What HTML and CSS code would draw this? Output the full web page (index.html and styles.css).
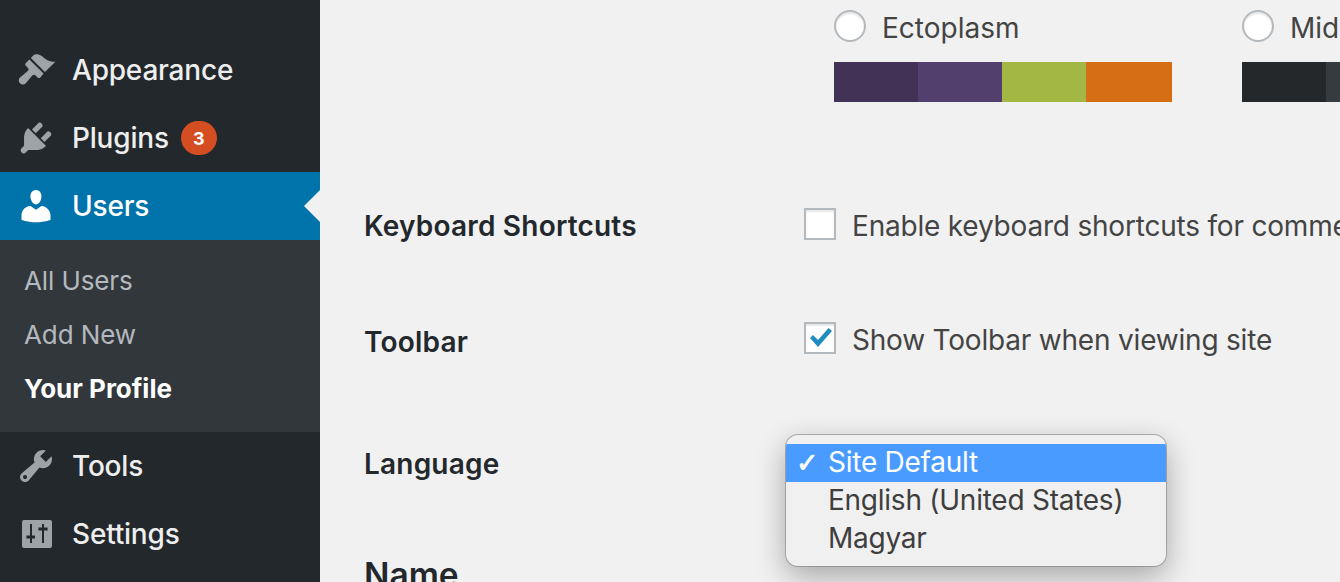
FILE: index.html
```html
<!DOCTYPE html>
<html lang="en">
<head>
<meta charset="utf-8">
<title>Profile</title>
<link rel="stylesheet" href="styles.css">
</head>
<body>
<div class="app">
  <nav class="sidebar">
    <a class="item"><svg class="icon" viewBox="0 0 20 20"><path d="M14.48 11.06L7.41 3.99l1.5-1.5c.5-.56 2.3-.47 3.51.32 1.21.8 1.43 1.28 2.91 2.1 1.18.64 2.45 1.26 4.45.85z"/><path d="M13.77 11.77L6.7 4.7 4.93 6.47c-.39.39-.39 1.02 0 1.41l1.06 1.06c.39.39.39 1.03 0 1.42-.6.6-3.4 2.8-4 3.4-.8.8-.8 2.1 0 2.9s2.1.8 2.9 0c.6-.6 2.8-3.4 3.4-4 .39-.39 1.03-.39 1.42 0l1.06 1.06c.39.39 1.02.39 1.41 0z"/></svg><span>Appearance</span></a>
    <a class="item"><svg class="icon" viewBox="0 0 20 20"><path d="M13.11 4.36L9.87 7.6 8 5.73l3.24-3.24c.35-.34 1.05-.2 1.56.32.52.51.66 1.21.31 1.55zm-8 1.77l.91-1.12 9.01 9.01-1.19.84c-.71.71-2.63 1.16-3.82 1.16H6.14L4.9 17.26c-.59.59-1.54.59-2.12 0-.59-.58-.59-1.53 0-2.12l1.24-1.24v-3.88c0-1.13.4-3.19 1.09-3.89zm7.26 3.97l3.24-3.24c.34-.35 1.04-.21 1.55.31.52.51.66 1.21.31 1.55l-3.24 3.25z"/></svg><span>Plugins</span><b class="badge">3</b></a>
    <a class="item current"><svg class="icon" viewBox="0 0 20 20"><path d="M10 9.25c-2.27 0-2.73-3.44-2.73-3.44C7 4.02 7.82 2 9.97 2c2.16 0 2.98 2.02 2.71 3.81 0 0-.41 3.44-2.68 3.44zm0 2.57L12.72 10c2.39 0 4.52 2.33 4.52 4.53v2.49s-3.65 1.13-7.24 1.13c-3.65 0-7.24-1.13-7.24-1.13v-2.49c0-2.25 1.94-4.48 4.47-4.48z"/></svg><span>Users</span></a>
    <div class="submenu">
      <a class="subitem">All Users</a>
      <a class="subitem">Add New</a>
      <a class="subitem active">Your Profile</a>
    </div>
    <a class="item"><svg class="icon" viewBox="0 0 20 20"><path d="M16.68 9.77c-1.34 1.34-3.3 1.67-4.95.99l-5.41 6.52c-.99.99-2.59.99-3.58 0s-.99-2.59 0-3.57l6.52-5.42c-.68-1.65-.35-3.61.99-4.95 1.28-1.28 3.12-1.62 4.72-1.06l-2.89 2.89 2.82 2.82 2.86-2.87c.53 1.58.18 3.39-1.08 4.65zM3.81 16.21c.4.39 1.04.39 1.43 0 .4-.4.4-1.04 0-1.43-.39-.4-1.03-.4-1.43 0-.39.39-.39 1.03 0 1.43z"/></svg><span>Tools</span></a>
    <a class="item"><svg class="icon" viewBox="0 0 20 20"><path fill-rule="evenodd" d="M4 3h13a1 1 0 0 1 1 1v12a1 1 0 0 1-1 1H4a1 1 0 0 1-1-1V4a1 1 0 0 1 1-1zM7 5v5.800H5.200v1.400H7v2.300h1v-2.300h1.500v-1.400H8V5zM13 5v1.800h-1.800v1.400H13v6.300h1V8.200h1.800V6.800H14V5z"/></svg><span>Settings</span></a>
  </nav>
  <main class="content">
    <div class="schemes">
      <div class="scheme">
        <label class="scheme-label"><span class="radio"></span><span>Ectoplasm</span></label>
        <div class="swatches">
          <i class="sw" style="background:#413256"></i><i class="sw" style="background:#523f6d"></i><i class="sw" style="background:#a3b745"></i><i class="sw last" style="background:#d46f15"></i>
        </div>
      </div>
      <div class="scheme">
        <label class="scheme-label"><span class="radio"></span><span>Midnight</span></label>
        <div class="swatches">
          <i class="sw" style="background:#25282b"></i><i class="sw" style="background:#363b3f"></i><i class="sw" style="background:#69a8bb"></i><i class="sw last" style="background:#e14d43"></i>
        </div>
      </div>
    </div>
    <div class="row row-keys">
      <div class="label">Keyboard Shortcuts</div>
      <label class="field"><span class="check"></span><span>Enable keyboard shortcuts for comment moderation.</span></label>
    </div>
    <div class="row row-toolbar">
      <div class="label">Toolbar</div>
      <label class="field field-up"><span class="check"><svg viewBox="0 0 28 28"><path d="M4 14l3-3 5 5L22.500 4 26 7 12 23z"/></svg></span><span>Show Toolbar when viewing site</span></label>
    </div>
    <div class="row row-lang">
      <div class="label">Language</div>
      <div class="select-menu">
        <div class="option selected"><span class="tick">✓</span>Site Default</div>
        <div class="option">English (United States)</div>
        <div class="option">Magyar</div>
      </div>
    </div>
    <h2 class="heading">Name</h2>
  </main>
</div>
</body>
</html>
```

FILE: styles.css
```css
* { box-sizing: border-box; }
html, body { margin: 0; height: 582px; overflow: hidden; }
body { background: #f1f1f1; color: #444; font-family: Inter, "Liberation Sans", sans-serif; font-size: 28px; }
.app { display: flex; height: 582px; overflow: hidden; }

.sidebar { flex: 0 0 320px; background: #23282d; padding-top: 36px; display: flex; flex-direction: column; }
.item { position: relative; height: 68px; display: flex; align-items: center; color: #eee; padding-left: 16px; flex: none; font-weight: 500; letter-spacing: -.2px; }
.icon { width: 40px; height: 40px; fill: #9ea3a8; margin-right: 16px; flex: none; }
.badge { margin-left: 12px; width: 36px; height: 34px; border-radius: 17px; background: #d54e21; color: #fff; font-size: 18px; font-weight: 700; letter-spacing: 0; display: flex; align-items: center; justify-content: center; }
.current { background: #0073aa; color: #fff; }
.current .icon { fill: #fff; }
.current::after { content: ""; position: absolute; right: 0; top: 18px; border: 16px solid transparent; border-left-width: 0; border-right-color: #f1f1f1; }
.submenu { background: #32373c; height: 192px; padding: 13px 0; flex: none; display: flex; flex-direction: column; }
.subitem { height: 54px; display: flex; align-items: center; padding-left: 24px; font-size: 26px; color: #b4b9be; letter-spacing: -.1px; }
.subitem.active { color: #fff; font-weight: 700; letter-spacing: 0; }

.content { flex: 1; min-width: 0; display: flex; flex-direction: column; padding-left: 44px; overflow: hidden; }
.schemes { height: 190px; padding-left: 470px; display: flex; gap: 70px; flex: none; }
.scheme { flex: none; width: 338px; }
.scheme-label { display: flex; align-items: center; gap: 16px; padding-top: 11px; height: 62px; padding-bottom: 17px; }
.radio { width: 32px; height: 32px; margin-bottom: 4px; border-radius: 50%; background: #fff; border: 2px solid #b4b9be; box-shadow: inset 0 2px 2px rgba(0,0,0,.1); flex: none; }
.swatches { display: flex; height: 40px; }
.sw { flex: 0 0 84px; }
.sw.last { flex-basis: 86px; }

.row { display: flex; align-items: center; flex: none; }
.label { width: 440px; font-weight: 600; color: #23282d; flex: none; font-size: 28px; letter-spacing: .2px; }
.field { display: flex; align-items: center; gap: 16px; white-space: nowrap; letter-spacing: -.2px; }
.field-up { margin-top: -4px; }
.check { width: 32px; height: 32px; margin-bottom: 4px; background: #fff; border: 2px solid #b4b9be; box-shadow: inset 0 2px 2px rgba(0,0,0,.1); display: flex; flex: none; }
.check svg { width: 28px; height: 28px; fill: #1e8cbe; }
.row-keys { height: 72px; }
.row-toolbar { height: 72px; margin-top: 44px; }
.row-lang { height: 40px; margin-top: 66px; }

.select-menu { position: absolute; left: 786px; top: 435px; width: 380px; height: 131px; background: #f0f0f0; border-radius: 12px; padding-top: 9px; letter-spacing: -.25px; box-shadow: 0 0 0 1px rgba(120,120,120,.55), 0 10px 30px rgba(0,0,0,.32); overflow: hidden; }
.option { height: 38px; display: flex; align-items: center; padding-left: 42px; padding-bottom: 2px; position: relative; color: #3e3e3e; }
.option.selected { background: #4a9bff; color: #fff; }
.tick { position: absolute; left: 10px; font-family: "DejaVu Sans", sans-serif; font-weight: 700; font-size: 27px; -webkit-text-stroke: .7px #fff; }

.heading { margin: 71px 0 0; font-size: 33.5px; font-weight: 600; color: #23282d; line-height: 40px; flex: none; }
```
